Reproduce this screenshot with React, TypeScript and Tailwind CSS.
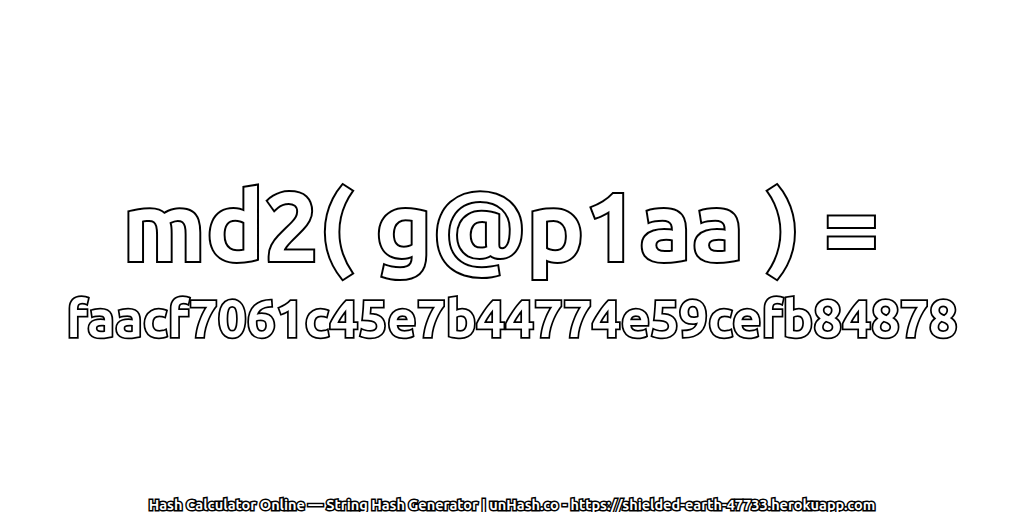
export default function App() {
  return (
    <div className="w-[1024px] h-[512px] bg-white flex flex-col items-center overflow-hidden font-['Ubuntu','Noto_Sans',sans-serif]">
      <div className="mt-[170px] text-[97px] leading-[110px] font-bold text-white whitespace-pre [-webkit-text-stroke:4px_#000] [paint-order:stroke_fill]">
        {"md2( g@p1aa ) =\u00a0"}
      </div>
      <div className="mt-[6px] text-[51.2px] leading-[64px] font-bold text-white whitespace-nowrap [-webkit-text-stroke:3.5px_#000] [paint-order:stroke_fill]">
        faacf7061c45e7b44774e59cefb84878
      </div>
      <div className="mt-auto mb-[-3px] text-[14.5px] leading-[20px] font-bold text-white whitespace-nowrap [-webkit-text-stroke:3px_#000] [paint-order:stroke_fill]">
        Hash Calculator Online — String Hash Generator | unHash.co - https://shielded-earth-47733.herokuapp.com
      </div>
    </div>
  )
}
